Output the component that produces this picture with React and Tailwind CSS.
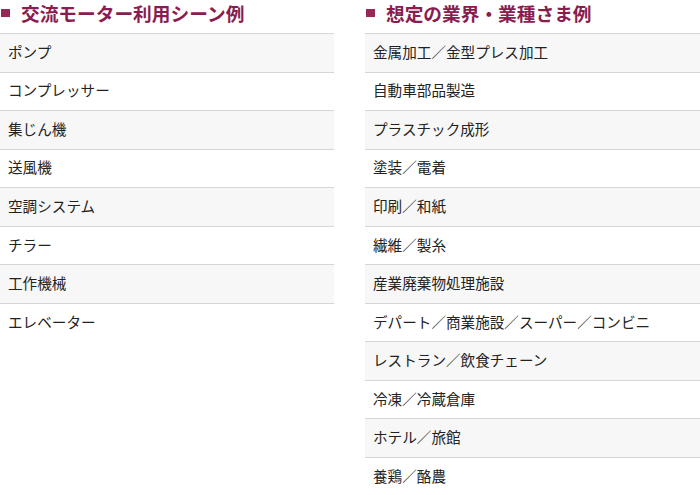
import React from "react";

const motorScenes = [
  "ポンプ",
  "コンプレッサー",
  "集じん機",
  "送風機",
  "空調システム",
  "チラー",
  "工作機械",
  "エレベーター",
];

const industries = [
  "金属加工／金型プレス加工",
  "自動車部品製造",
  "プラスチック成形",
  "塗装／電着",
  "印刷／和紙",
  "繊維／製糸",
  "産業廃棄物処理施設",
  "デパート／商業施設／スーパー／コンビニ",
  "レストラン／飲食チェーン",
  "冷凍／冷蔵倉庫",
  "ホテル／旅館",
  "養鶏／酪農",
];

function ListColumn({ title, items, className }) {
  return (
    <div className={className}>
      <h2 className="flex items-center h-[33px] pb-[7px]">
        <span className="ml-[1px] mr-[11px] w-[9px] h-[8px] bg-[#98275a]" />
        <span className="text-[18.7px] leading-[26px] font-bold text-[#8a1d4f]">
          {title}
        </span>
      </h2>
      <ul>
        {items.map((item, i) => (
          <li
            key={item}
            className={`box-border h-[38.55px] flex items-center px-2 pb-[2px] border-t border-[#d6d6d6] text-[14.6px] text-[#222] ${
              i % 2 === 0 ? "bg-[#f7f7f7]" : "bg-white"
            }`}
          >
            {item}
          </li>
        ))}
      </ul>
    </div>
  );
}

export default function App() {
  return (
    <div
      className="w-[700px] h-[495px] overflow-hidden bg-white flex gap-[31px]"
      style={{ fontFamily: '"Noto Sans CJK JP", "Noto Sans", sans-serif' }}
    >
      <ListColumn
        title="交流モーター利用シーン例"
        items={motorScenes}
        className="w-[334px]"
      />
      <ListColumn
        title="想定の業界・業種さま例"
        items={industries}
        className="flex-1"
      />
    </div>
  );
}
